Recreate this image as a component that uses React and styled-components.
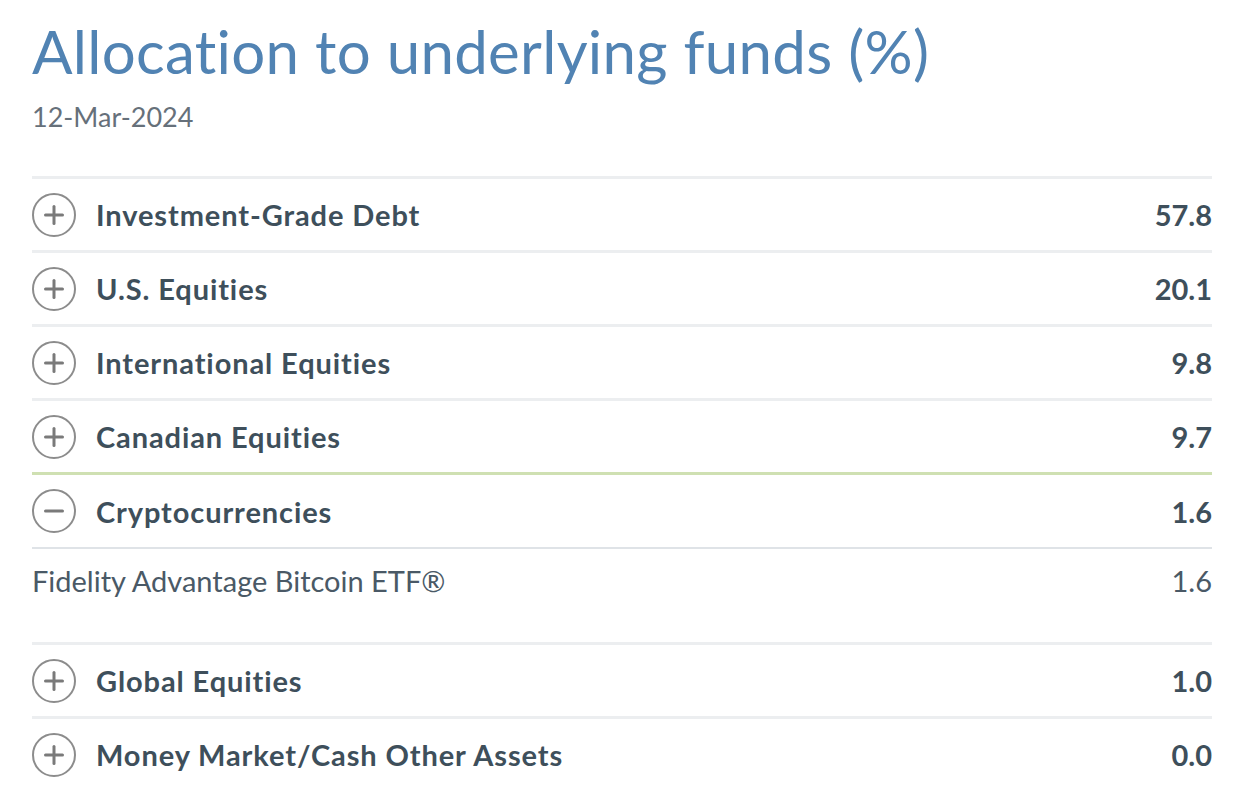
import React from "react";
import styled, { createGlobalStyle } from "styled-components";

const GlobalStyle = createGlobalStyle`
  body {
    margin: 0;
    background: #ffffff;
    font-family: "Lato", "Open Sans", sans-serif;
  }
`;

const Page = styled.div`
  padding: 16px 26px 0 32px;
  width: 1180px;
`;

const Title = styled.h1`
  margin: 0;
  font-size: 60px;
  font-weight: 400;
  color: #5183b3;
  line-height: 70px;
  letter-spacing: 0.3px;
`;

const DateLine = styled.div`
  margin-top: 15px;
  font-size: 27px;
  color: #66707a;
  line-height: 32px;
`;

const List = styled.div`
  margin-top: 43px;
  border-top: 3px solid #eceef0;
`;

const Row = styled.div`
  display: flex;
  align-items: center;
  height: 71px;
  border-bottom: 3px solid ${(p) => (p.$open ? "#cfe0b2" : "#eceef0")};

  &:last-child {
    border-bottom-color: transparent;
  }
`;

const Toggle = styled.span`
  flex: none;
  display: flex;
  align-items: center;
  justify-content: center;
  width: 44px;
  height: 44px;
  margin-right: 20px;
`;

const Label = styled.div`
  flex: 1;
  font-size: 29px;
  font-weight: 700;
  letter-spacing: 0.9px;
  color: #3e4f5b;
`;

const Value = styled.div`
  font-size: 29px;
  font-weight: 700;
  color: #3e4f5b;
`;

const Expanded = styled.div`
  border-bottom: 3px solid #eceef0;
`;

const ExpandedHead = styled(Row)`
  border-bottom: 2px solid #dfe3e7;
  height: 72px;
`;

const SubRow = styled.div`
  display: flex;
  align-items: flex-start;
  justify-content: space-between;
  height: 93px;
  padding-top: 14px;
  box-sizing: border-box;
  font-size: 29px;
  color: #4a5966;
`;

function Icon({ open }) {
  return (
    <svg width="44" height="44" viewBox="0 0 44 44">
      <circle cx="22" cy="22" r="21" fill="none" stroke="#8c8c8c" strokeWidth="2" />
      <line x1="13.5" y1="22" x2="30.5" y2="22" stroke="#7a7a7a" strokeWidth="3" strokeLinecap="round" />
      {!open && (
        <line x1="22" y1="13.5" x2="22" y2="30.5" stroke="#7a7a7a" strokeWidth="3" strokeLinecap="round" />
      )}
    </svg>
  );
}

const before = [
  ["Investment-Grade Debt", "57.8"],
  ["U.S. Equities", "20.1"],
  ["International Equities", "9.8"],
];

const after = [
  ["Global Equities", "1.0"],
  ["Money Market/Cash Other Assets", "0.0"],
];

export default function App() {
  return (
    <Page>
      <GlobalStyle />
      <Title>Allocation to underlying funds (%)</Title>
      <DateLine>12-Mar-2024</DateLine>
      <List>
        {before.map(([name, val]) => (
          <Row key={name}>
            <Toggle>
              <Icon />
            </Toggle>
            <Label>{name}</Label>
            <Value>{val}</Value>
          </Row>
        ))}
        <Row $open>
          <Toggle>
            <Icon />
          </Toggle>
          <Label>Canadian Equities</Label>
          <Value>9.7</Value>
        </Row>
        <Expanded>
          <ExpandedHead>
            <Toggle>
              <Icon open />
            </Toggle>
            <Label>Cryptocurrencies</Label>
            <Value>1.6</Value>
          </ExpandedHead>
          <SubRow>
            <span>Fidelity Advantage Bitcoin ETF®</span>
            <span>1.6</span>
          </SubRow>
        </Expanded>
        {after.map(([name, val]) => (
          <Row key={name}>
            <Toggle>
              <Icon />
            </Toggle>
            <Label>{name}</Label>
            <Value>{val}</Value>
          </Row>
        ))}
      </List>
    </Page>
  );
}
